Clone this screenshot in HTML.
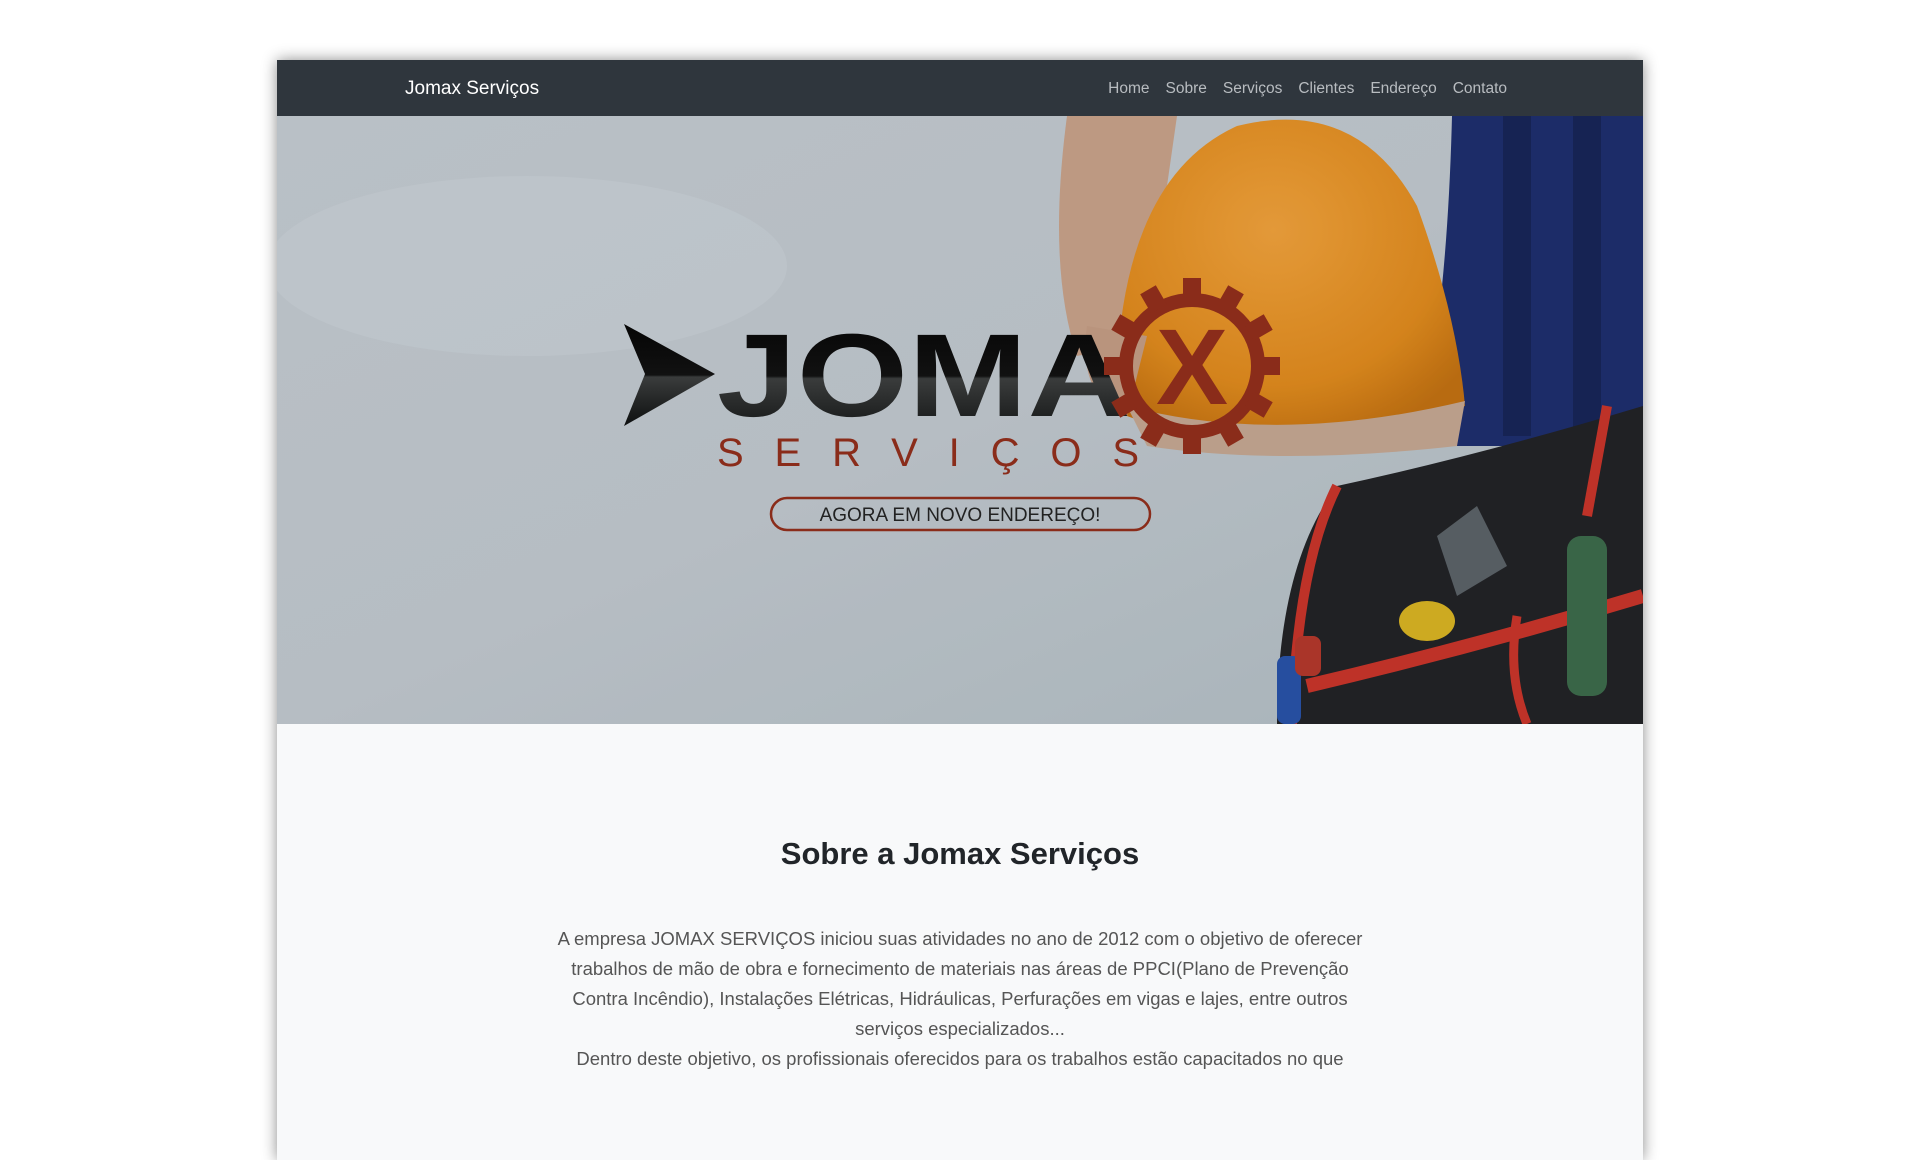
<!DOCTYPE html>
<html><head><meta charset="utf-8"><style>
*{margin:0;padding:0;box-sizing:border-box}
body{width:1920px;height:1080px;overflow:hidden;background:#fff;font-family:"Liberation Sans",sans-serif}
#wrap{position:absolute;left:277px;top:60px;width:1366px;height:1100px;background:#f8f9fa;box-shadow:0 0 14px rgba(0,0,0,.45)}
nav{height:56px;background:#2f363d;position:relative}
.brand{position:absolute;left:128px;top:18px;color:#fff;font-size:19px}
.links{position:absolute;right:136px;top:20px;font-size:15.5px;color:#b8bcc0}
.links span{margin-left:16px}
#hero{position:relative;height:608px;overflow:hidden}
h2{position:absolute;top:776px;width:100%;text-align:center;font-size:31px;font-weight:bold;color:#212529}
p{position:absolute;top:864px;left:270px;width:826px;text-align:center;font-size:18.5px;line-height:30px;color:#555}
</style></head><body>
<div id="wrap">
<nav><div class="brand">Jomax Serviços</div><div class="links"><span>Home</span><span>Sobre</span><span>Serviços</span><span>Clientes</span><span>Endereço</span><span>Contato</span></div></nav>
<div id="hero">
<svg width="1366" height="608" viewBox="0 0 1366 608">
<defs>
<linearGradient id="sky" x1="0" y1="0" x2="1" y2="1"><stop offset="0" stop-color="#c3cbd1"/><stop offset=".5" stop-color="#c0c8ce"/><stop offset="1" stop-color="#b1bcc4"/></linearGradient>
<radialGradient id="hel" cx=".45" cy=".35" r=".7"><stop offset="0" stop-color="#f0a23c"/><stop offset=".7" stop-color="#e08b1e"/><stop offset="1" stop-color="#c27112"/></radialGradient>
<linearGradient id="jt" x1="0" y1="0" x2="0" y2="1"><stop offset="0" stop-color="#050505"/><stop offset=".5" stop-color="#111"/><stop offset=".52" stop-color="#3a3c3c"/><stop offset="1" stop-color="#0d0f0f"/></linearGradient>
</defs>
<rect width="1366" height="608" fill="url(#sky)"/>
<ellipse cx="250" cy="150" rx="260" ry="90" fill="#cdd4d9" opacity=".5"/>
<!-- shirt -->
<path d="M1175 0 H1366 V330 H1140 Q1170 200 1175 0Z" fill="#1e2f6e"/>
<path d="M1240 0 V320 M1310 0 V320" stroke="#15204a" stroke-width="28" opacity=".6"/>
<!-- arm -->
<path d="M790 0 H900 L880 140 Q860 200 850 230 L800 240 Q770 150 790 0Z" fill="#c8a28a"/>
<!-- helmet -->
<path d="M840 250 Q850 60 960 10 Q1080 -20 1140 90 Q1180 200 1188 290 Q1100 320 1000 320 Q900 320 850 300Z" fill="url(#hel)"/>
<path d="M850 290 Q1000 330 1188 285 L1180 330 Q1000 350 870 330Z" fill="#c4a792"/>
<path d="M810 210 Q800 280 850 300 L870 220Z" fill="#c39c84"/>
<!-- belt -->
<path d="M1060 370 Q1200 340 1366 290 V608 H1000 Q1000 450 1060 370Z" fill="#222326"/>
<path d="M1060 370 Q1020 450 1015 608" stroke="#c9352b" stroke-width="10" fill="none"/>
<path d="M1030 570 Q1200 530 1366 480" stroke="#c9352b" stroke-width="14" fill="none"/>
<path d="M1330 290 L1310 400" stroke="#c9352b" stroke-width="10"/>
<rect x="1290" y="420" width="40" height="160" rx="14" fill="#3d6b4b"/>
<path d="M1160 420 L1200 390 L1230 450 L1180 480Z" fill="#5b6268"/>
<ellipse cx="1150" cy="505" rx="28" ry="20" fill="#d9b423"/>
<rect x="1000" y="540" width="24" height="68" rx="8" fill="#2953a8"/>
<rect x="1018" y="520" width="26" height="40" rx="8" fill="#b4382c"/>
<path d="M1240 500 Q1230 560 1250 608" stroke="#c9352b" stroke-width="9" fill="none"/>
<rect width="1366" height="608" fill="#000" opacity=".05"/>
<!-- logo arrow -->
<path d="M347 208 L438 258 L347 310 L368 258Z" fill="url(#jt)"/>
<text x="440" y="300" textLength="414" lengthAdjust="spacingAndGlyphs" font-family="Liberation Sans,sans-serif" font-weight="bold" font-size="118" fill="url(#jt)">JOMA</text>
<!-- gear -->
<g transform="translate(915,250)" fill="#8a2c1a">
<circle r="66" fill="none" stroke="#8a2c1a" stroke-width="14"/>
<g id="t"><rect x="-9" y="-88" width="18" height="22"/></g>
<use href="#t" transform="rotate(30)"/><use href="#t" transform="rotate(60)"/><use href="#t" transform="rotate(90)"/><use href="#t" transform="rotate(120)"/><use href="#t" transform="rotate(150)"/><use href="#t" transform="rotate(180)"/><use href="#t" transform="rotate(210)"/><use href="#t" transform="rotate(240)"/><use href="#t" transform="rotate(270)"/><use href="#t" transform="rotate(300)"/><use href="#t" transform="rotate(330)"/>
<text x="0" y="38" text-anchor="middle" font-family="Liberation Sans,sans-serif" font-weight="bold" font-size="108" fill="#8a2c1a">X</text>
</g>
<text x="440" y="350" textLength="422" font-family="Liberation Sans,sans-serif" font-size="40" fill="#8a2c1a">SERVIÇOS</text>
<rect x="494" y="382" width="379" height="32" rx="16" fill="none" stroke="#8a2c1a" stroke-width="2.5"/>
<text x="683" y="405" text-anchor="middle" font-family="Liberation Sans,sans-serif" font-size="19" fill="#222">AGORA EM NOVO ENDEREÇO!</text>
</svg>
</div>
<h2>Sobre a Jomax Serviços</h2>
<p>A empresa JOMAX SERVIÇOS iniciou suas atividades no ano de 2012 com o objetivo de oferecer trabalhos de mão de obra e fornecimento de materiais nas áreas de PPCI(Plano de Prevenção Contra Incêndio), Instalações Elétricas, Hidráulicas, Perfurações em vigas e lajes, entre outros serviços especializados...<br>Dentro deste objetivo, os profissionais oferecidos para os trabalhos estão capacitados no que</p>
</div>
</body></html>
